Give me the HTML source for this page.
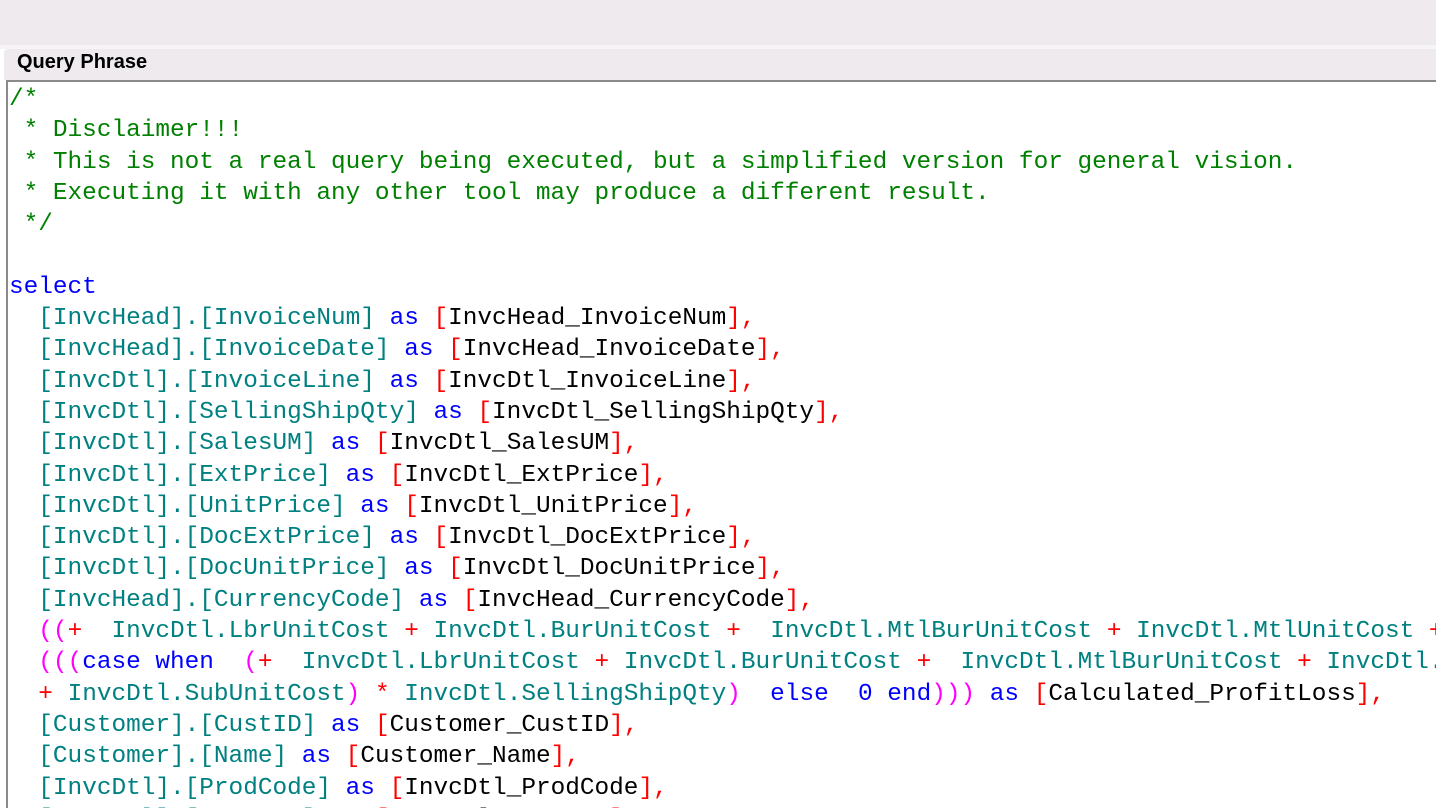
<!DOCTYPE html>
<html><head><meta charset="utf-8"><style>
html,body{margin:0;padding:0;width:1436px;height:808px;overflow:hidden;background:#fff}
#top{position:absolute;left:0;top:0;width:1436px;height:45px;background:#eeeaee}
#sep{position:absolute;left:0;top:45px;width:1436px;height:4px;background:#f6f4f6}
#hdr{position:absolute;left:4px;top:49px;width:1432px;height:31px;background:#eeeaee;border-top-left-radius:4px}
#hdr span{position:absolute;left:13px;top:2px;font:bold 20px "Liberation Sans",sans-serif;color:#000}
#ed{position:absolute;left:6px;top:80px;width:1428px;height:726px;border-left:2px solid #8a8a8a;border-top:2px solid #8a8a8a;background:#fff;overflow:hidden}
#code{position:absolute;left:1px;top:2px;font-family:"Liberation Mono",monospace;font-size:24.4px;color:#000}
#code div{height:31.3px;line-height:31.3px;white-space:pre}
.c{color:#008000}.k{color:#0000ff}.i{color:#008080}.r{color:#ff0000}.m{color:#ff00ff}
</style></head><body>
<div id="top"></div><div id="sep"></div>
<div id="hdr"><span>Query Phrase</span></div>
<div id="ed"><div id="code">
<div class="c">/*</div>
<div class="c"> * Disclaimer!!!</div>
<div class="c"> * This is not a real query being executed, but a simplified version for general vision.</div>
<div class="c"> * Executing it with any other tool may produce a different result.</div>
<div class="c"> */</div>
<div> </div>
<div class="k">select</div>
<div>  <span class="i">[InvcHead].[InvoiceNum]</span> <span class="k">as</span> <span class="r">[</span>InvcHead_InvoiceNum<span class="r">],</span></div>
<div>  <span class="i">[InvcHead].[InvoiceDate]</span> <span class="k">as</span> <span class="r">[</span>InvcHead_InvoiceDate<span class="r">],</span></div>
<div>  <span class="i">[InvcDtl].[InvoiceLine]</span> <span class="k">as</span> <span class="r">[</span>InvcDtl_InvoiceLine<span class="r">],</span></div>
<div>  <span class="i">[InvcDtl].[SellingShipQty]</span> <span class="k">as</span> <span class="r">[</span>InvcDtl_SellingShipQty<span class="r">],</span></div>
<div>  <span class="i">[InvcDtl].[SalesUM]</span> <span class="k">as</span> <span class="r">[</span>InvcDtl_SalesUM<span class="r">],</span></div>
<div>  <span class="i">[InvcDtl].[ExtPrice]</span> <span class="k">as</span> <span class="r">[</span>InvcDtl_ExtPrice<span class="r">],</span></div>
<div>  <span class="i">[InvcDtl].[UnitPrice]</span> <span class="k">as</span> <span class="r">[</span>InvcDtl_UnitPrice<span class="r">],</span></div>
<div>  <span class="i">[InvcDtl].[DocExtPrice]</span> <span class="k">as</span> <span class="r">[</span>InvcDtl_DocExtPrice<span class="r">],</span></div>
<div>  <span class="i">[InvcDtl].[DocUnitPrice]</span> <span class="k">as</span> <span class="r">[</span>InvcDtl_DocUnitPrice<span class="r">],</span></div>
<div>  <span class="i">[InvcHead].[CurrencyCode]</span> <span class="k">as</span> <span class="r">[</span>InvcHead_CurrencyCode<span class="r">],</span></div>
<div>  <span class="m">((</span><span class="r">+</span>  <span class="i">InvcDtl.LbrUnitCost</span> <span class="r">+</span> <span class="i">InvcDtl.BurUnitCost</span> <span class="r">+</span>  <span class="i">InvcDtl.MtlBurUnitCost</span> <span class="r">+</span> <span class="i">InvcDtl.MtlUnitCost</span> <span class="r">+</span> <span class="i">InvcDtl.SubUnitCost</span></div>
<div>  <span class="m">(((</span><span class="k">case when</span>  <span class="m">(</span><span class="r">+</span>  <span class="i">InvcDtl.LbrUnitCost</span> <span class="r">+</span> <span class="i">InvcDtl.BurUnitCost</span> <span class="r">+</span>  <span class="i">InvcDtl.MtlBurUnitCost</span> <span class="r">+</span> <span class="i">InvcDtl.MtlUnitCost</span></div>
<div>  <span class="r">+</span> <span class="i">InvcDtl.SubUnitCost</span><span class="m">)</span> <span class="r">*</span> <span class="i">InvcDtl.SellingShipQty</span><span class="m">)</span>  <span class="k">else</span>  <span class="k">0</span> <span class="k">end</span><span class="m">)))</span> <span class="k">as</span> <span class="r">[</span>Calculated_ProfitLoss<span class="r">],</span></div>
<div>  <span class="i">[Customer].[CustID]</span> <span class="k">as</span> <span class="r">[</span>Customer_CustID<span class="r">],</span></div>
<div>  <span class="i">[Customer].[Name]</span> <span class="k">as</span> <span class="r">[</span>Customer_Name<span class="r">],</span></div>
<div>  <span class="i">[InvcDtl].[ProdCode]</span> <span class="k">as</span> <span class="r">[</span>InvcDtl_ProdCode<span class="r">],</span></div>
<div>  <span class="i">[InvcDtl].[PartNum]</span> <span class="k">as</span> <span class="r">[</span>InvcDtl_PartNum<span class="r">],</span></div>
</div></div>
</body></html>
